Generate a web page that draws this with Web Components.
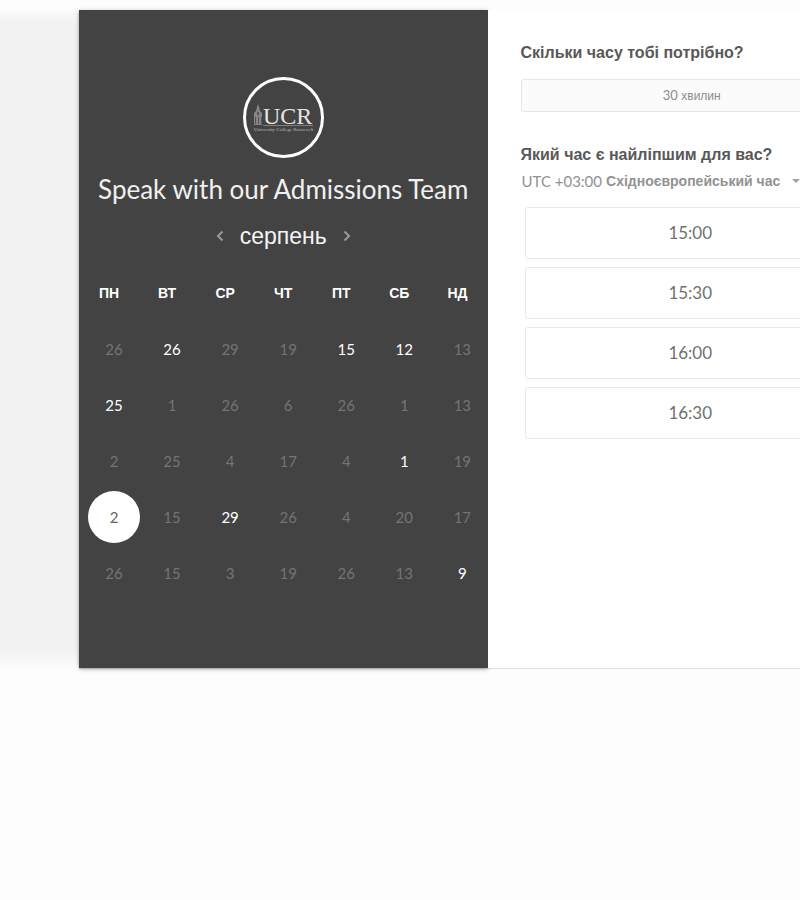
<!DOCTYPE html>
<html lang="uk">
<head>
<meta charset="utf-8">
<meta name="viewport" content="width=device-width, initial-scale=1">
<title>Speak with our Admissions Team</title>
<style>
  body { margin: 0; min-height: 100vh; background: #fdfdfd; overflow-x: hidden; font-family: "Liberation Sans", Arial, sans-serif; }
</style>
</head>
<body>
<booking-stage>
  <booking-calendar slot="calendar" month="серпень">
    <college-logo slot="logo"></college-logo>
    Speak with our Admissions Team
  </booking-calendar>
  <booking-times slot="times">
    <duration-choice slot="duration"><span slot="count">30</span> хвилин</duration-choice>
    <time-zone slot="zone" offset="UTC +03:00" name="Східноєвропейський час"></time-zone>
    <time-slot>15:00</time-slot>
    <time-slot>15:30</time-slot>
    <time-slot>16:00</time-slot>
    <time-slot>16:30</time-slot>
  </booking-times>
</booking-stage>
<script>
const define = (name, html, setup) => {
  const template = document.createElement('template');
  template.innerHTML = html;
  customElements.define(name, class extends HTMLElement {
    constructor() {
      super();
      this.attachShadow({ mode: 'open' }).append(template.content.cloneNode(true));
    }
    connectedCallback() { if (setup) setup(this, this.shadowRoot); }
  });
};

define('booking-stage', `
<style>
  :host { display: block; padding-top: 10px; }
  .band { padding-left: 79px; background: linear-gradient(#fdfdfd 0, #f2f2f2 12px, #f2f2f2 calc(100% - 18px), #fdfdfd 100%); }
  /* The card runs past the right edge of the window. */
  .card { display: grid; grid-template-columns: 1fr 1fr; margin-right: -96px; background: #fff; box-shadow: 0 1px 1px rgba(0,0,0,.1); }
</style>
<div class="band"><main class="card"><slot name="calendar"></slot><slot name="times"></slot></main></div>`);

define('college-logo', `
<style>:host { display: block; } svg { display: block; width: 81px; height: 81px; }</style>
<svg viewBox="0 0 81 81" role="img" aria-label="UCR">
  <circle cx="40.500" cy="40.500" r="39" fill="none" stroke="#fff" stroke-width="3"/>
  <g fill="#858585">
    <path d="M11 48V36l2-2 1-4 1-3 1 3 1 4 2 2v12z"/>
    <path d="M14 35h2v3h-2zm-2 5h1v7h-1zm3 0h1v7h-1zm3 0h1v7h-1z" fill="#555"/>
  </g>
  <path d="M20 48.500h50" stroke="#808080"/>
  <text x="20" y="47" font-family="Liberation Serif, serif" font-size="24" fill="#e4e4e4">UCR</text>
  <text x="11" y="54" font-family="Liberation Serif, serif" font-size="5" fill="#bbb">University College Roosevelt</text>
</svg>`);

define('booking-calendar', `
<style>
  :host { display: flex; flex-direction: column; align-items: center; background: #434343; color: #fff; padding: 67px 1px; box-shadow: 0 1px 4px rgba(0,0,0,.35); }
  h1 { margin: 15px 0 0; font: 400 26px/32px Lato, sans-serif; color: #f0f0f0; white-space: nowrap; }
  nav { display: flex; align-items: center; gap: 16px; margin-top: 14px; height: 34px; }
  h2 { margin: 0; font-weight: 400; font-size: 23px; line-height: 34px; color: #f5f5f5; }
  button { font: inherit; color: inherit; background: none; border: 0; padding: 0; }
  nav svg { display: block; width: 8px; height: 12px; fill: none; stroke: #999; stroke-width: 2; }
  table { width: 100%; table-layout: fixed; border-collapse: collapse; margin-top: 28px; }
  th { height: 24px; padding: 0 0 16px; font: 700 14px/24px "Liberation Sans", Arial, sans-serif; text-align: center; }
  td { height: 56px; padding: 0 0 0 10px; font: 400 15px/20px Lato, sans-serif; }
  td button { display: block; height: 52px; width: 52px; margin: 0 -2px; border-radius: 50%; color: #747474; }
  td button.open { color: #fff; }
  td button[aria-pressed=true] { background: #fff; color: #666; }
</style>
<slot name="logo"></slot>
<h1><slot></slot></h1>
<nav aria-label="Місяць">
  <button aria-label="Попередній"><svg viewBox="0 0 8 12"><path d="M6.500 1.500 2 6l4.500 4.500"/></svg></button>
  <h2></h2>
  <button aria-label="Наступний"><svg viewBox="0 0 8 12"><path d="M1.500 1.500 6 6l-4.500 4.500"/></svg></button>
</nav>
<table><thead><tr></tr></thead><tbody></tbody></table>`, (host, root) => {
  root.querySelector('h2').textContent = host.getAttribute('month');
  root.querySelector('thead tr').innerHTML =
    ['ПН', 'ВТ', 'СР', 'ЧТ', 'ПТ', 'СБ', 'НД'].map(d => `<th scope="col">${d}</th>`).join('');
  // "+" marks a day with free times, "*" the selected day.
  const weeks = [
    '26 26+ 29 19 15+ 12+ 13',
    '25+ 1 26 6 26 1 13',
    '2 25 4 17 4 1+ 19',
    '2* 15 29+ 26 4 20 17',
    '26 15 3 19 26 13 9+'
  ];
  root.querySelector('tbody').innerHTML = weeks.map(week => '<tr>' + week.split(' ').map(day => {
    const state = day.endsWith('+') ? 'class="open"' : day.endsWith('*') ? 'aria-pressed="true"' : 'disabled';
    return `<td><button ${state}>${parseInt(day)}</button></td>`;
  }).join('') + '</tr>').join('');
});

define('booking-times', `
<style>
  :host { display: block; position: relative; background: #fff; padding: 32px 33px; color: #585858; }
  h2 { margin: 0; font-size: 16px; line-height: 22px; font-weight: 700; }
  .duration { margin: 15px 0 32px; }
  .zone { margin-top: 5px; }
  .list { display: grid; gap: 8px; padding: 0 7px 0 4px; margin-top: 16px; }
</style>
<h2>Скільки часу тобі потрібно?</h2>
<div class="duration"><slot name="duration"></slot></div>
<h2>Який час є найліпшим для вас?</h2>
<div class="zone"><slot name="zone"></slot></div>
<div class="list"><slot></slot></div>`);

define('duration-choice', `
<style>
  :host { display: block; }
  button { display: block; width: 100%; height: 33px; padding: 0; border: 1px solid #e6e6e6; border-radius: 3px; background: #fbfbfb; color: #8c8c8c; font: 400 12px/18px "Liberation Sans", Arial, sans-serif; }
  ::slotted(span) { font-family: Lato, sans-serif; font-size: 13px; }
</style>
<button><slot name="count"></slot> <slot></slot></button>`);

define('time-zone', `
<style>
  :host { display: flex; align-items: center; gap: 4px; height: 20px; padding-left: 1px; color: #929292; line-height: 20px; white-space: nowrap; }
  label { font-family: Lato, sans-serif; font-size: 15px; }
  select { appearance: none; field-sizing: content; border: 0; padding: 0; margin: 0; background: none; color: inherit; font: 700 14px/20px "Liberation Sans", Arial, sans-serif; }
  svg { width: 8px; height: 4px; fill: #a0a0a0; margin-left: 8px; }
</style>
<label for="zone"></label><select id="zone"><option></option></select><svg viewBox="0 0 8 4" aria-hidden="true"><path d="M0 0h8L4 4z"/></svg>`, (host, root) => {
  root.querySelector('label').textContent = host.getAttribute('offset');
  root.querySelector('option').textContent = host.getAttribute('name');
});

define('time-slot', `
<style>
  :host { display: block; }
  button { display: block; width: 100%; height: 52px; padding: 0; border: 1px solid #e9e9e9; border-radius: 3px; background: #fff; color: #707070; font: 400 17px/24px Lato, sans-serif; }
</style>
<button><slot></slot></button>`);
</script>
</body>
</html>
